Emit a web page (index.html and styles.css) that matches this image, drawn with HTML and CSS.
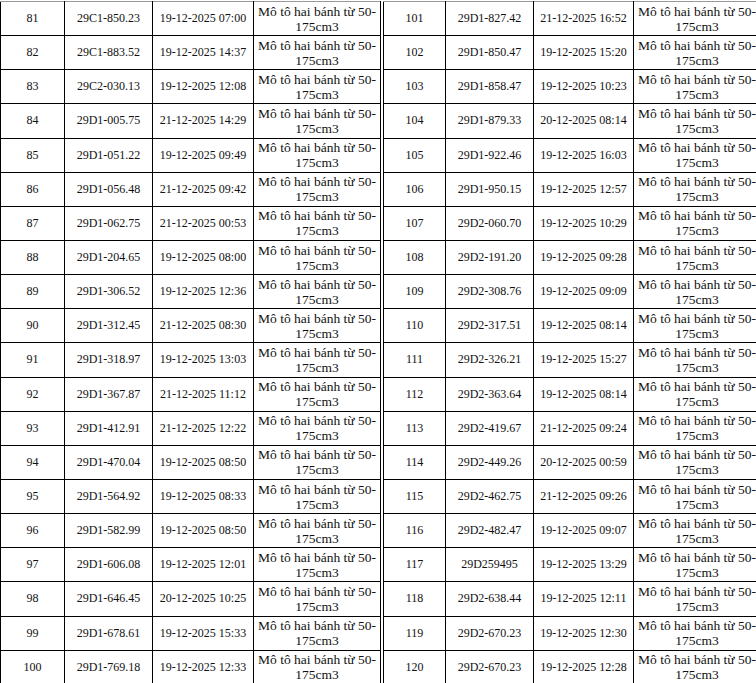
FILE: index.html
```html
<!DOCTYPE html>
<html lang="vi">
<head>
<meta charset="utf-8">
<title>Danh sách</title>
<link rel="stylesheet" href="styles.css">
</head>
<body>
<div class="viewport">
<div class="sheet">
<table class="grid grid-left">
<colgroup><col class="c-no-l"><col class="c-plate"><col class="c-date"><col class="c-type"></colgroup>
<tbody>
<tr><td>81</td><td>29C1-850.23</td><td>19-12-2025 07:00</td><td class="type">Mô tô hai bánh từ 50-175cm3</td></tr>
<tr><td>82</td><td>29C1-883.52</td><td>19-12-2025 14:37</td><td class="type">Mô tô hai bánh từ 50-175cm3</td></tr>
<tr><td>83</td><td>29C2-030.13</td><td>19-12-2025 12:08</td><td class="type">Mô tô hai bánh từ 50-175cm3</td></tr>
<tr><td>84</td><td>29D1-005.75</td><td>21-12-2025 14:29</td><td class="type">Mô tô hai bánh từ 50-175cm3</td></tr>
<tr><td>85</td><td>29D1-051.22</td><td>19-12-2025 09:49</td><td class="type">Mô tô hai bánh từ 50-175cm3</td></tr>
<tr><td>86</td><td>29D1-056.48</td><td>21-12-2025 09:42</td><td class="type">Mô tô hai bánh từ 50-175cm3</td></tr>
<tr><td>87</td><td>29D1-062.75</td><td>21-12-2025 00:53</td><td class="type">Mô tô hai bánh từ 50-175cm3</td></tr>
<tr><td>88</td><td>29D1-204.65</td><td>19-12-2025 08:00</td><td class="type">Mô tô hai bánh từ 50-175cm3</td></tr>
<tr><td>89</td><td>29D1-306.52</td><td>19-12-2025 12:36</td><td class="type">Mô tô hai bánh từ 50-175cm3</td></tr>
<tr><td>90</td><td>29D1-312.45</td><td>21-12-2025 08:30</td><td class="type">Mô tô hai bánh từ 50-175cm3</td></tr>
<tr><td>91</td><td>29D1-318.97</td><td>19-12-2025 13:03</td><td class="type">Mô tô hai bánh từ 50-175cm3</td></tr>
<tr><td>92</td><td>29D1-367.87</td><td>21-12-2025 11:12</td><td class="type">Mô tô hai bánh từ 50-175cm3</td></tr>
<tr><td>93</td><td>29D1-412.91</td><td>21-12-2025 12:22</td><td class="type">Mô tô hai bánh từ 50-175cm3</td></tr>
<tr><td>94</td><td>29D1-470.04</td><td>19-12-2025 08:50</td><td class="type">Mô tô hai bánh từ 50-175cm3</td></tr>
<tr><td>95</td><td>29D1-564.92</td><td>19-12-2025 08:33</td><td class="type">Mô tô hai bánh từ 50-175cm3</td></tr>
<tr><td>96</td><td>29D1-582.99</td><td>19-12-2025 08:50</td><td class="type">Mô tô hai bánh từ 50-175cm3</td></tr>
<tr><td>97</td><td>29D1-606.08</td><td>19-12-2025 12:01</td><td class="type">Mô tô hai bánh từ 50-175cm3</td></tr>
<tr><td>98</td><td>29D1-646.45</td><td>20-12-2025 10:25</td><td class="type">Mô tô hai bánh từ 50-175cm3</td></tr>
<tr><td>99</td><td>29D1-678.61</td><td>19-12-2025 15:33</td><td class="type">Mô tô hai bánh từ 50-175cm3</td></tr>
<tr><td>100</td><td>29D1-769.18</td><td>19-12-2025 12:33</td><td class="type">Mô tô hai bánh từ 50-175cm3</td></tr>
</tbody>
</table>
<table class="grid grid-right">
<colgroup><col class="c-no-r"><col class="c-plate"><col class="c-date-r"><col class="c-type"></colgroup>
<tbody>
<tr><td>101</td><td>29D1-827.42</td><td>21-12-2025 16:52</td><td class="type">Mô tô hai bánh từ 50-175cm3</td></tr>
<tr><td>102</td><td>29D1-850.47</td><td>19-12-2025 15:20</td><td class="type">Mô tô hai bánh từ 50-175cm3</td></tr>
<tr><td>103</td><td>29D1-858.47</td><td>19-12-2025 10:23</td><td class="type">Mô tô hai bánh từ 50-175cm3</td></tr>
<tr><td>104</td><td>29D1-879.33</td><td>20-12-2025 08:14</td><td class="type">Mô tô hai bánh từ 50-175cm3</td></tr>
<tr><td>105</td><td>29D1-922.46</td><td>19-12-2025 16:03</td><td class="type">Mô tô hai bánh từ 50-175cm3</td></tr>
<tr><td>106</td><td>29D1-950.15</td><td>19-12-2025 12:57</td><td class="type">Mô tô hai bánh từ 50-175cm3</td></tr>
<tr><td>107</td><td>29D2-060.70</td><td>19-12-2025 10:29</td><td class="type">Mô tô hai bánh từ 50-175cm3</td></tr>
<tr><td>108</td><td>29D2-191.20</td><td>19-12-2025 09:28</td><td class="type">Mô tô hai bánh từ 50-175cm3</td></tr>
<tr><td>109</td><td>29D2-308.76</td><td>19-12-2025 09:09</td><td class="type">Mô tô hai bánh từ 50-175cm3</td></tr>
<tr><td>110</td><td>29D2-317.51</td><td>19-12-2025 08:14</td><td class="type">Mô tô hai bánh từ 50-175cm3</td></tr>
<tr><td>111</td><td>29D2-326.21</td><td>19-12-2025 15:27</td><td class="type">Mô tô hai bánh từ 50-175cm3</td></tr>
<tr><td>112</td><td>29D2-363.64</td><td>19-12-2025 08:14</td><td class="type">Mô tô hai bánh từ 50-175cm3</td></tr>
<tr><td>113</td><td>29D2-419.67</td><td>21-12-2025 09:24</td><td class="type">Mô tô hai bánh từ 50-175cm3</td></tr>
<tr><td>114</td><td>29D2-449.26</td><td>20-12-2025 00:59</td><td class="type">Mô tô hai bánh từ 50-175cm3</td></tr>
<tr><td>115</td><td>29D2-462.75</td><td>21-12-2025 09:26</td><td class="type">Mô tô hai bánh từ 50-175cm3</td></tr>
<tr><td>116</td><td>29D2-482.47</td><td>19-12-2025 09:07</td><td class="type">Mô tô hai bánh từ 50-175cm3</td></tr>
<tr><td>117</td><td>29D259495</td><td>19-12-2025 13:29</td><td class="type">Mô tô hai bánh từ 50-175cm3</td></tr>
<tr><td>118</td><td>29D2-638.44</td><td>19-12-2025 12:11</td><td class="type">Mô tô hai bánh từ 50-175cm3</td></tr>
<tr><td>119</td><td>29D2-670.23</td><td>19-12-2025 12:30</td><td class="type">Mô tô hai bánh từ 50-175cm3</td></tr>
<tr><td>120</td><td>29D2-670.23</td><td>19-12-2025 12:28</td><td class="type">Mô tô hai bánh từ 50-175cm3</td></tr>
</tbody>
</table>
</div>
</div>
</body>
</html>
```
FILE: styles.css
```css
html, body {
  margin: 0;
  padding: 0;
  background: #ffffff;
  overflow: hidden;
}

body {
  font-family: "Liberation Serif", "Times New Roman", serif;
  font-size: 12px;
  color: #111111;
}

.viewport {
  width: 756px;
  height: 683px;
  overflow: hidden;
}

.sheet {
  display: flex;
  gap: 2px;
  padding-top: 1px;
  width: 800px;
}

.grid {
  flex-shrink: 0;
  border-collapse: collapse;
  table-layout: fixed;
}

.grid-left { width: 380px; }
.grid-right { width: 377px; }

.c-no-l { width: 64px; }
.c-no-r { width: 62px; }
.c-plate { width: 88px; }
.c-date { width: 101px; }
.c-date-r { width: 100px; }
.c-type { width: 127px; }

.grid tr { height: 34.15px; }

.grid td {
  border: 1px solid #000000;
  padding: 0 2px;
  text-align: center;
  vertical-align: middle;
  white-space: nowrap;
  line-height: 15px;
}

.grid tr:first-child td { border-top-color: #9a9a9a; }

.grid td.type {
  white-space: normal;
  font-size: 13.5px;
  line-height: 15px;
  padding: 0 1px;
}
```
